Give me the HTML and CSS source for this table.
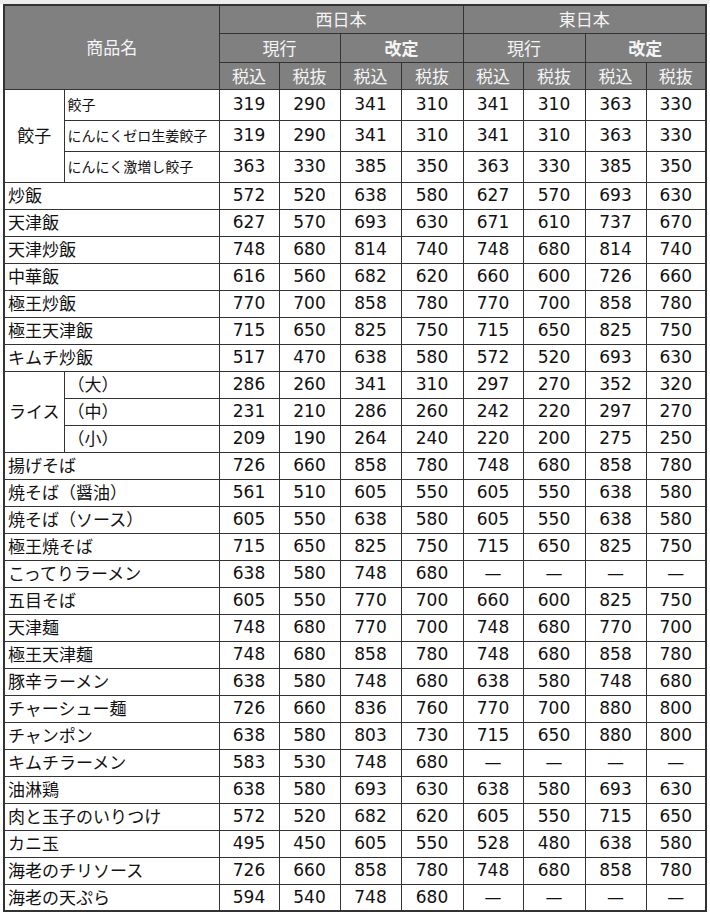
FILE: index.html
```html
<!DOCTYPE html>
<html lang="ja">
<head>
<meta charset="utf-8">
<title>価格表</title>
<link rel="stylesheet" href="styles.css">
</head>
<body>
<div class="topbar"></div>
<table class="price">
<colgroup>
<col class="c-grp"><col class="c-name">
<col class="c-p1"><col class="c-p2"><col class="c-p3"><col class="c-p4">
<col class="c-p5"><col class="c-p6"><col class="c-p7"><col class="c-p8">
</colgroup>
<thead>
<tr class="h1"><th colspan="2" rowspan="3">商品名</th><th colspan="4">西日本</th><th colspan="4">東日本</th></tr>
<tr class="h2"><th colspan="2">現行</th><th colspan="2" class="bold">改定</th><th colspan="2">現行</th><th colspan="2" class="bold">改定</th></tr>
<tr class="h3"><th>税込</th><th>税抜</th><th>税込</th><th>税抜</th><th>税込</th><th>税抜</th><th>税込</th><th>税抜</th></tr>
</thead>
<tbody>
<tr class="tall"><td rowspan="3" class="grp">餃子</td><td class="sub small">餃子</td><td>319</td><td>290</td><td>341</td><td>310</td><td>341</td><td>310</td><td>363</td><td>330</td></tr>
<tr class="tall"><td class="sub small">にんにくゼロ生姜餃子</td><td>319</td><td>290</td><td>341</td><td>310</td><td>341</td><td>310</td><td>363</td><td>330</td></tr>
<tr class="tall"><td class="sub small">にんにく激増し餃子</td><td>363</td><td>330</td><td>385</td><td>350</td><td>363</td><td>330</td><td>385</td><td>350</td></tr>
<tr><td colspan="2" class="name">炒飯</td><td>572</td><td>520</td><td>638</td><td>580</td><td>627</td><td>570</td><td>693</td><td>630</td></tr>
<tr><td colspan="2" class="name">天津飯</td><td>627</td><td>570</td><td>693</td><td>630</td><td>671</td><td>610</td><td>737</td><td>670</td></tr>
<tr><td colspan="2" class="name">天津炒飯</td><td>748</td><td>680</td><td>814</td><td>740</td><td>748</td><td>680</td><td>814</td><td>740</td></tr>
<tr><td colspan="2" class="name">中華飯</td><td>616</td><td>560</td><td>682</td><td>620</td><td>660</td><td>600</td><td>726</td><td>660</td></tr>
<tr><td colspan="2" class="name">極王炒飯</td><td>770</td><td>700</td><td>858</td><td>780</td><td>770</td><td>700</td><td>858</td><td>780</td></tr>
<tr><td colspan="2" class="name">極王天津飯</td><td>715</td><td>650</td><td>825</td><td>750</td><td>715</td><td>650</td><td>825</td><td>750</td></tr>
<tr><td colspan="2" class="name">キムチ炒飯</td><td>517</td><td>470</td><td>638</td><td>580</td><td>572</td><td>520</td><td>693</td><td>630</td></tr>
<tr><td rowspan="3" class="grp">ライス</td><td class="sub">（大）</td><td>286</td><td>260</td><td>341</td><td>310</td><td>297</td><td>270</td><td>352</td><td>320</td></tr>
<tr><td class="sub">（中）</td><td>231</td><td>210</td><td>286</td><td>260</td><td>242</td><td>220</td><td>297</td><td>270</td></tr>
<tr><td class="sub">（小）</td><td>209</td><td>190</td><td>264</td><td>240</td><td>220</td><td>200</td><td>275</td><td>250</td></tr>
<tr><td colspan="2" class="name">揚げそば</td><td>726</td><td>660</td><td>858</td><td>780</td><td>748</td><td>680</td><td>858</td><td>780</td></tr>
<tr><td colspan="2" class="name">焼そば（醤油）</td><td>561</td><td>510</td><td>605</td><td>550</td><td>605</td><td>550</td><td>638</td><td>580</td></tr>
<tr><td colspan="2" class="name">焼そば（ソース）</td><td>605</td><td>550</td><td>638</td><td>580</td><td>605</td><td>550</td><td>638</td><td>580</td></tr>
<tr><td colspan="2" class="name">極王焼そば</td><td>715</td><td>650</td><td>825</td><td>750</td><td>715</td><td>650</td><td>825</td><td>750</td></tr>
<tr><td colspan="2" class="name">こってりラーメン</td><td>638</td><td>580</td><td>748</td><td>680</td><td>—</td><td>—</td><td>—</td><td>—</td></tr>
<tr><td colspan="2" class="name">五目そば</td><td>605</td><td>550</td><td>770</td><td>700</td><td>660</td><td>600</td><td>825</td><td>750</td></tr>
<tr><td colspan="2" class="name">天津麺</td><td>748</td><td>680</td><td>770</td><td>700</td><td>748</td><td>680</td><td>770</td><td>700</td></tr>
<tr><td colspan="2" class="name">極王天津麺</td><td>748</td><td>680</td><td>858</td><td>780</td><td>748</td><td>680</td><td>858</td><td>780</td></tr>
<tr><td colspan="2" class="name">豚辛ラーメン</td><td>638</td><td>580</td><td>748</td><td>680</td><td>638</td><td>580</td><td>748</td><td>680</td></tr>
<tr><td colspan="2" class="name">チャーシュー麺</td><td>726</td><td>660</td><td>836</td><td>760</td><td>770</td><td>700</td><td>880</td><td>800</td></tr>
<tr><td colspan="2" class="name">チャンポン</td><td>638</td><td>580</td><td>803</td><td>730</td><td>715</td><td>650</td><td>880</td><td>800</td></tr>
<tr><td colspan="2" class="name">キムチラーメン</td><td>583</td><td>530</td><td>748</td><td>680</td><td>—</td><td>—</td><td>—</td><td>—</td></tr>
<tr><td colspan="2" class="name">油淋鶏</td><td>638</td><td>580</td><td>693</td><td>630</td><td>638</td><td>580</td><td>693</td><td>630</td></tr>
<tr><td colspan="2" class="name">肉と玉子のいりつけ</td><td>572</td><td>520</td><td>682</td><td>620</td><td>605</td><td>550</td><td>715</td><td>650</td></tr>
<tr><td colspan="2" class="name">カニ玉</td><td>495</td><td>450</td><td>605</td><td>550</td><td>528</td><td>480</td><td>638</td><td>580</td></tr>
<tr><td colspan="2" class="name">海老のチリソース</td><td>726</td><td>660</td><td>858</td><td>780</td><td>748</td><td>680</td><td>858</td><td>780</td></tr>
<tr><td colspan="2" class="name">海老の天ぷら</td><td>594</td><td>540</td><td>748</td><td>680</td><td>—</td><td>—</td><td>—</td><td>—</td></tr>
</tbody>
</table>
</body>
</html>
```
FILE: styles.css
```css
html, body {
  margin: 0;
  padding: 0;
  background: #ffffff;
}
.topbar {
  height: 4px;
  background: #ececec;
}
.price {
  margin-left: 3px;
  border-collapse: collapse;
  table-layout: fixed;
  width: 702px;
  border: 2px solid #333333;
  font-family: "DejaVu Sans", "Noto Sans CJK JP", sans-serif;
  font-size: 17px;
  color: #111111;
}
.c-grp { width: 60px; }
.c-name { width: 155px; }
.c-p1 { width: 60px; }
.c-p2 { width: 61px; }
.c-p3 { width: 61px; }
.c-p4 { width: 62px; }
.c-p5 { width: 60px; }
.c-p6 { width: 62px; }
.c-p7 { width: 61px; }
.c-p8 { width: 60px; }
.price th, .price td {
  border: 1px solid #333333;
  padding: 0;
  line-height: 20px;
  white-space: nowrap;
  overflow: hidden;
}
.price th {
  background: #808080;
  color: #f4f4f4;
  font-family: "Noto Sans CJK JP", sans-serif;
  font-weight: normal;
  font-size: 17px;
  text-align: center;
}
.price th.bold {
  font-weight: bold;
}
.price .h1 { height: 28px; }
.price .h2 { height: 29px; }
.price .h3 { height: 27px; }
.price tbody tr { height: 27px; }
.price tbody tr.tall { height: 31px; }
.price td {
  text-align: center;
  vertical-align: middle;
  padding-bottom: 1px;
}
.price td.name, .price td.sub {
  text-align: left;
  padding-left: 3px;
  font-family: "Noto Sans CJK JP", sans-serif;
}
.price td.small {
  font-size: 14px;
}
.price td.grp {
  font-family: "Noto Sans CJK JP", sans-serif;
  text-align: center;
}
```
